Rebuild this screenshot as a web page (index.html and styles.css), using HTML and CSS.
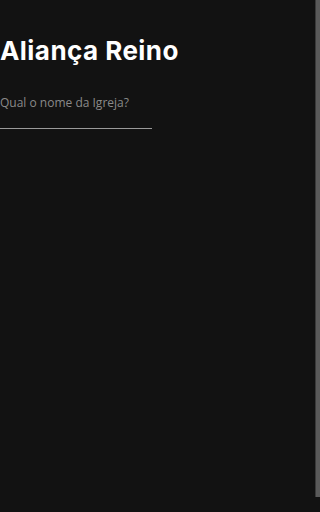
FILE: index.html
```html
<!DOCTYPE html>
<html lang="pt">
<head>
<meta charset="utf-8">
<link rel="stylesheet" href="styles.css">
</head>
<body>
<main class="page">
  <h1 class="title">Aliança Reino</h1>
  <input class="field" type="text" placeholder="Qual o nome da Igreja?">
</main>
<div class="scrollbar"></div>
</body>
</html>
```
FILE: styles.css
```css
html, body {
  margin: 0;
  padding: 0;
  background: #121212;
  height: 100%;
  overflow: hidden;
}
.page {
  display: flex;
  flex-direction: column;
  align-items: flex-start;
  padding-top: 35px;
}
.title {
  margin: 0;
  font-family: Inter, "Noto Sans", sans-serif;
  font-weight: 700;
  font-size: 26px;
  line-height: 32px;
  color: #ffffff;
  letter-spacing: 0.45px;
}
.field {
  margin-top: 27px;
  width: 152px;
  box-sizing: border-box;
  padding: 0 0 16px 0;
  border: 0;
  border-bottom: 1px solid #9a9a9a;
  background: transparent;
  font-family: "Open Sans", sans-serif;
  font-size: 12px;
  line-height: 18px;
  color: #ddd;
  outline: none;
}
.field::placeholder {
  color: #8a8a8a;
}
.scrollbar {
  position: fixed;
  top: 0;
  right: 0;
  width: 4px;
  height: 497px;
  background: #5a5a5a;
  border-left: 1px solid #3a3a3a;
}
```
